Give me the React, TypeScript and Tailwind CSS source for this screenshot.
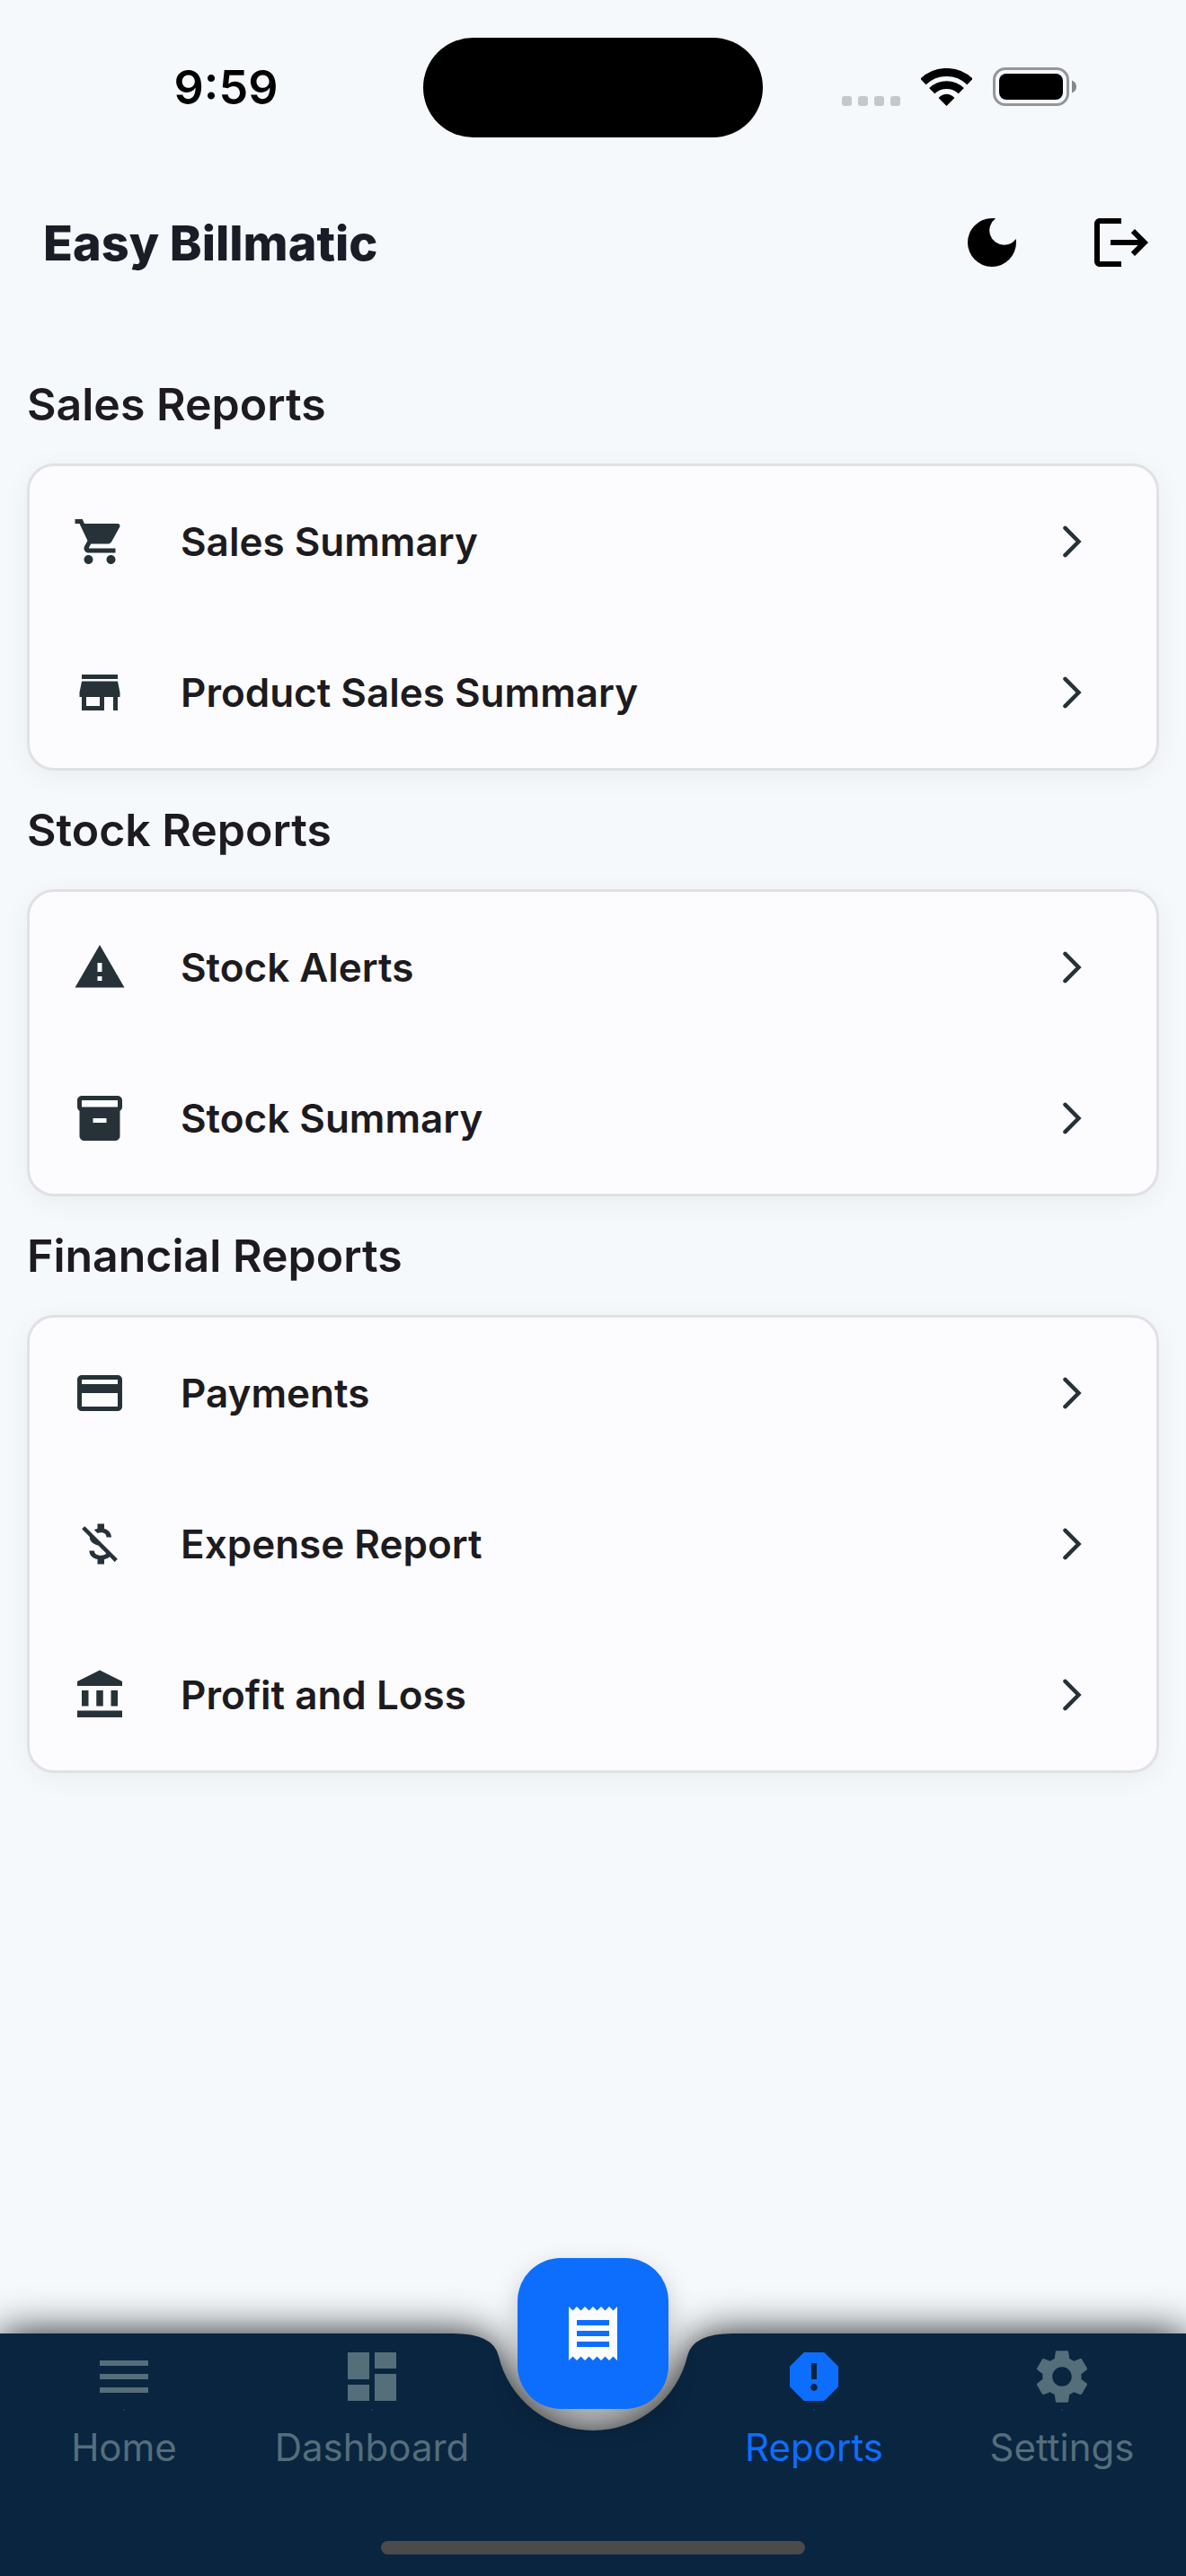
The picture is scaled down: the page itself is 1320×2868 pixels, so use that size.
import type { ReactNode } from "react";
import type { IconType } from "react-icons";
import {
  MdAccountBalance,
  MdDarkMode,
  MdDashboard,
  MdInventory2,
  MdLogout,
  MdMenu,
  MdMoneyOff,
  MdPayment,
  MdReceipt,
  MdReport,
  MdSettings,
  MdShoppingCart,
  MdStore,
  MdWarning,
} from "react-icons/md";

interface ReportItem {
  label: string;
  icon: IconType;
}

interface ReportGroup {
  title: string;
  items: ReportItem[];
}

const reportGroups: ReportGroup[] = [
  {
    title: "Sales Reports",
    items: [
      { label: "Sales Summary", icon: MdShoppingCart },
      { label: "Product Sales Summary", icon: MdStore },
    ],
  },
  {
    title: "Stock Reports",
    items: [
      { label: "Stock Alerts", icon: MdWarning },
      { label: "Stock Summary", icon: MdInventory2 },
    ],
  },
  {
    title: "Financial Reports",
    items: [
      { label: "Payments", icon: MdPayment },
      { label: "Expense Report", icon: MdMoneyOff },
      { label: "Profit and Loss", icon: MdAccountBalance },
    ],
  },
];

function StatusBar() {
  return (
    <div className="grid h-[186px] grid-cols-[1fr_378px_1fr] pt-[42px] pb-[33px] text-black">
      <div className="flex items-center justify-center pl-8 text-[52px] leading-none font-semibold">
        9:59
      </div>
      <div className="rounded-full bg-black" />
      <div className="flex items-center justify-center pr-[34px] pb-0.5">
        <div className="flex items-end gap-[23px]">
          <div className="flex gap-[7px]">
            <span className="size-[11px] rounded-[3px] bg-[#c5c7ca]" />
            <span className="size-[11px] rounded-[3px] bg-[#c5c7ca]" />
            <span className="size-[11px] rounded-[3px] bg-[#c5c7ca]" />
            <span className="size-[11px] rounded-[3px] bg-[#c5c7ca]" />
          </div>
          <svg width="57" height="42" viewBox="0 0 57 42" fill="none">
            <path
              d="M2.4 15A37.5 37.5 0 0 1 54.6 15"
              stroke="currentColor"
              strokeWidth="9"
            />
            <path
              d="M12.2 25.2A23.4 23.4 0 0 1 44.8 25.2"
              stroke="currentColor"
              strokeWidth="8.8"
            />
            <path
              d="M28.5 42L19.6 32.9Q28.5 24.6 37.4 32.9Z"
              fill="currentColor"
            />
          </svg>
          <svg width="93" height="43" viewBox="0 0 93 43">
            <rect
              x="1.5"
              y="1.5"
              width="82"
              height="40"
              rx="12.5"
              fill="none"
              stroke="#959699"
              strokeWidth="3"
            />
            <rect x="7" y="7" width="71" height="29" rx="8" />
            <path d="M88 14.5Q93 16.5 93 21.5T88 28.5Z" fill="#86888a" />
          </svg>
        </div>
      </div>
    </div>
  );
}

function Header() {
  return (
    <header className="flex h-[168px] items-center justify-between pl-12">
      <h1 className="text-[54px] font-extrabold text-[#1a1c26]">
        Easy Billmatic
      </h1>
      <div className="flex text-black">
        <button
          type="button"
          aria-label="Toggle dark mode"
          className="flex size-36 items-center justify-center"
        >
          <MdDarkMode className="size-18" />
        </button>
        <button
          type="button"
          aria-label="Log out"
          className="flex size-36 items-center justify-center"
        >
          <MdLogout className="size-18" />
        </button>
      </div>
    </header>
  );
}

function ReportRow({ label, icon: Icon }: ReportItem) {
  return (
    <a
      href="#"
      className="flex h-[168px] items-center gap-15 pr-[75px] pl-12"
    >
      <Icon className="size-15 shrink-0 text-[#263238]" />
      <span className="flex-1 text-[44px] font-semibold">{label}</span>
      <svg
        className="size-9 shrink-0 text-[#263238]"
        viewBox="0 0 36 36"
        fill="none"
        stroke="currentColor"
        strokeWidth="4.5"
        strokeLinecap="round"
      >
        <path d="M9.5 2.8L24.5 18L9.5 33.2" />
      </svg>
    </a>
  );
}

function ReportSection({ title, items }: ReportGroup) {
  return (
    <section>
      <h2 className="my-[30px] text-[50px] leading-[72px] font-semibold">
        {title}
      </h2>
      <div className="rounded-[30px] border-3 border-[#e0e1e4] bg-[#fcfcfe] shadow-[0_6px_30px_rgba(0,0,0,0.05)]">
        {items.map((item) => (
          <ReportRow key={item.label} {...item} />
        ))}
      </div>
    </section>
  );
}

interface NavItemProps {
  label: string;
  icon: IconType;
  active?: boolean;
}

function NavItem({ label, icon: Icon, active = false }: NavItemProps) {
  return (
    <a
      href="#"
      aria-current={active ? "page" : undefined}
      className={
        active
          ? "flex flex-col items-center pt-3 text-[#0d6efd]"
          : "flex flex-col items-center pt-3 text-[#546e7a]"
      }
    >
      <Icon className="size-18" />
      <span className="size-0.5 bg-[#0b3b7d]" />
      <span className="mt-4 text-[42px] leading-[50px]">{label}</span>
    </a>
  );
}

// Bar background with a round cut-out below the floating button
function NavBackground() {
  return (
    <div className="absolute inset-0 flex text-[#0a2540] drop-shadow-[0_3px_24px_#000000]">
      <div className="flex-1 bg-current" />
      <svg width="320" height="270" viewBox="0 0 320 270" fill="currentColor">
        <path d="M0 0H4Q49 0 54.9 24.95A108 108 0 0 0 265.1 24.95Q271 0 316 0H320V270H0Z" />
      </svg>
      <div className="flex-1 bg-current" />
    </div>
  );
}

function BottomNav({ children }: { children: ReactNode }) {
  return (
    <nav className="relative mt-auto h-[270px]">
      <NavBackground />
      <div className="relative grid grid-cols-[1fr_1fr_216px_1fr_1fr]">
        {children}
      </div>
      <div className="absolute bottom-6 left-1/2 h-[15px] w-[472px] -translate-x-1/2 rounded-full bg-[#4b4b4b]" />
    </nav>
  );
}

export default function App() {
  return (
    <div className="flex min-h-screen flex-col overflow-hidden bg-[#f5f9fc] font-['Inter',sans-serif] text-[#1d1b20]">
      <StatusBar />
      <Header />

      <main className="flex flex-col px-[30px] py-[30px]">
        {reportGroups.map((group) => (
          <ReportSection key={group.title} {...group} />
        ))}
      </main>

      <BottomNav>
        <NavItem label="Home" icon={MdMenu} />
        <NavItem label="Dashboard" icon={MdDashboard} />
        <div className="flex justify-center">
          <button
            type="button"
            aria-label="New bill"
            className="-mt-21 flex size-42 items-center justify-center rounded-[48px] bg-[#0d6efd] text-[#fcfcfe] shadow-[0_12px_30px_rgba(0,0,0,0.22)]"
          >
            <MdReceipt className="size-18" />
          </button>
        </div>
        <NavItem label="Reports" icon={MdReport} active />
        <NavItem label="Settings" icon={MdSettings} />
      </BottomNav>
    </div>
  );
}
